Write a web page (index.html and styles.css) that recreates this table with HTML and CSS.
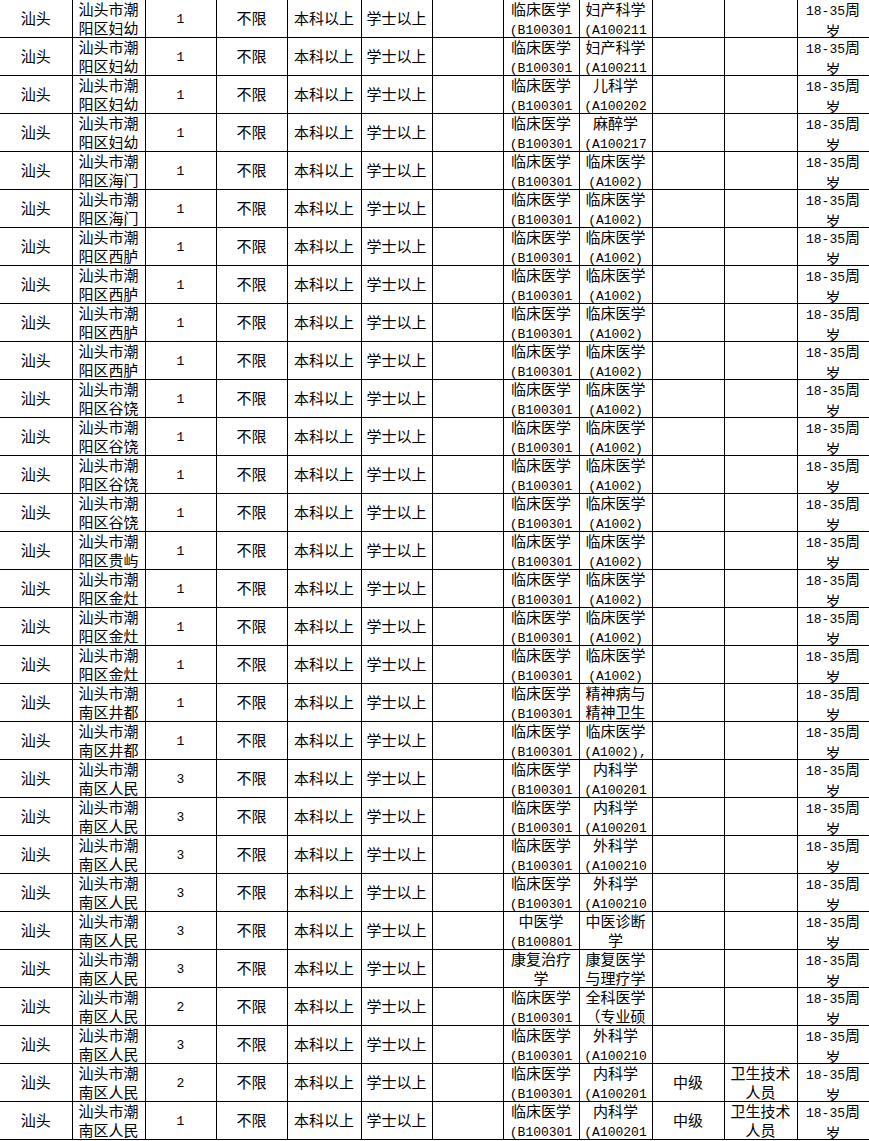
FILE: index.html
```html
<!DOCTYPE html>
<html lang="zh-CN">
<head>
<meta charset="utf-8">
<title>岗位表</title>
<link rel="stylesheet" href="styles.css">
</head>
<body>
<table class="grid">
<colgroup>
<col class="w72"><col class="w73"><col class="w71"><col class="w71"><col class="w74"><col class="w71"><col class="w71"><col class="w76"><col class="w73"><col class="w72"><col class="w73"><col class="w72">
</colgroup>
<tbody>
<tr><td><div class="c">汕头</div></td><td><div class="c">汕头市潮<br>阳区妇幼</div></td><td><div class="c"><span class="l">1</span></div></td><td><div class="c">不限</div></td><td><div class="c">本科以上</div></td><td><div class="c">学士以上</div></td><td><div class="c"></div></td><td><div class="c">临床医学<br><span class="l">(B100301</span></div></td><td><div class="c">妇产科学<br><span class="l">(A100211</span></div></td><td><div class="c"></div></td><td><div class="c"></div></td><td><div class="c"><span class="l">18-35</span>周<br>岁</div></td></tr>
<tr><td><div class="c">汕头</div></td><td><div class="c">汕头市潮<br>阳区妇幼</div></td><td><div class="c"><span class="l">1</span></div></td><td><div class="c">不限</div></td><td><div class="c">本科以上</div></td><td><div class="c">学士以上</div></td><td><div class="c"></div></td><td><div class="c">临床医学<br><span class="l">(B100301</span></div></td><td><div class="c">妇产科学<br><span class="l">(A100211</span></div></td><td><div class="c"></div></td><td><div class="c"></div></td><td><div class="c"><span class="l">18-35</span>周<br>岁</div></td></tr>
<tr><td><div class="c">汕头</div></td><td><div class="c">汕头市潮<br>阳区妇幼</div></td><td><div class="c"><span class="l">1</span></div></td><td><div class="c">不限</div></td><td><div class="c">本科以上</div></td><td><div class="c">学士以上</div></td><td><div class="c"></div></td><td><div class="c">临床医学<br><span class="l">(B100301</span></div></td><td><div class="c">儿科学<br><span class="l">(A100202</span></div></td><td><div class="c"></div></td><td><div class="c"></div></td><td><div class="c"><span class="l">18-35</span>周<br>岁</div></td></tr>
<tr><td><div class="c">汕头</div></td><td><div class="c">汕头市潮<br>阳区妇幼</div></td><td><div class="c"><span class="l">1</span></div></td><td><div class="c">不限</div></td><td><div class="c">本科以上</div></td><td><div class="c">学士以上</div></td><td><div class="c"></div></td><td><div class="c">临床医学<br><span class="l">(B100301</span></div></td><td><div class="c">麻醉学<br><span class="l">(A100217</span></div></td><td><div class="c"></div></td><td><div class="c"></div></td><td><div class="c"><span class="l">18-35</span>周<br>岁</div></td></tr>
<tr><td><div class="c">汕头</div></td><td><div class="c">汕头市潮<br>阳区海门</div></td><td><div class="c"><span class="l">1</span></div></td><td><div class="c">不限</div></td><td><div class="c">本科以上</div></td><td><div class="c">学士以上</div></td><td><div class="c"></div></td><td><div class="c">临床医学<br><span class="l">(B100301</span></div></td><td><div class="c">临床医学<br><span class="l">(A1002)</span></div></td><td><div class="c"></div></td><td><div class="c"></div></td><td><div class="c"><span class="l">18-35</span>周<br>岁</div></td></tr>
<tr><td><div class="c">汕头</div></td><td><div class="c">汕头市潮<br>阳区海门</div></td><td><div class="c"><span class="l">1</span></div></td><td><div class="c">不限</div></td><td><div class="c">本科以上</div></td><td><div class="c">学士以上</div></td><td><div class="c"></div></td><td><div class="c">临床医学<br><span class="l">(B100301</span></div></td><td><div class="c">临床医学<br><span class="l">(A1002)</span></div></td><td><div class="c"></div></td><td><div class="c"></div></td><td><div class="c"><span class="l">18-35</span>周<br>岁</div></td></tr>
<tr><td><div class="c">汕头</div></td><td><div class="c">汕头市潮<br>阳区西胪</div></td><td><div class="c"><span class="l">1</span></div></td><td><div class="c">不限</div></td><td><div class="c">本科以上</div></td><td><div class="c">学士以上</div></td><td><div class="c"></div></td><td><div class="c">临床医学<br><span class="l">(B100301</span></div></td><td><div class="c">临床医学<br><span class="l">(A1002)</span></div></td><td><div class="c"></div></td><td><div class="c"></div></td><td><div class="c"><span class="l">18-35</span>周<br>岁</div></td></tr>
<tr><td><div class="c">汕头</div></td><td><div class="c">汕头市潮<br>阳区西胪</div></td><td><div class="c"><span class="l">1</span></div></td><td><div class="c">不限</div></td><td><div class="c">本科以上</div></td><td><div class="c">学士以上</div></td><td><div class="c"></div></td><td><div class="c">临床医学<br><span class="l">(B100301</span></div></td><td><div class="c">临床医学<br><span class="l">(A1002)</span></div></td><td><div class="c"></div></td><td><div class="c"></div></td><td><div class="c"><span class="l">18-35</span>周<br>岁</div></td></tr>
<tr><td><div class="c">汕头</div></td><td><div class="c">汕头市潮<br>阳区西胪</div></td><td><div class="c"><span class="l">1</span></div></td><td><div class="c">不限</div></td><td><div class="c">本科以上</div></td><td><div class="c">学士以上</div></td><td><div class="c"></div></td><td><div class="c">临床医学<br><span class="l">(B100301</span></div></td><td><div class="c">临床医学<br><span class="l">(A1002)</span></div></td><td><div class="c"></div></td><td><div class="c"></div></td><td><div class="c"><span class="l">18-35</span>周<br>岁</div></td></tr>
<tr><td><div class="c">汕头</div></td><td><div class="c">汕头市潮<br>阳区西胪</div></td><td><div class="c"><span class="l">1</span></div></td><td><div class="c">不限</div></td><td><div class="c">本科以上</div></td><td><div class="c">学士以上</div></td><td><div class="c"></div></td><td><div class="c">临床医学<br><span class="l">(B100301</span></div></td><td><div class="c">临床医学<br><span class="l">(A1002)</span></div></td><td><div class="c"></div></td><td><div class="c"></div></td><td><div class="c"><span class="l">18-35</span>周<br>岁</div></td></tr>
<tr><td><div class="c">汕头</div></td><td><div class="c">汕头市潮<br>阳区谷饶</div></td><td><div class="c"><span class="l">1</span></div></td><td><div class="c">不限</div></td><td><div class="c">本科以上</div></td><td><div class="c">学士以上</div></td><td><div class="c"></div></td><td><div class="c">临床医学<br><span class="l">(B100301</span></div></td><td><div class="c">临床医学<br><span class="l">(A1002)</span></div></td><td><div class="c"></div></td><td><div class="c"></div></td><td><div class="c"><span class="l">18-35</span>周<br>岁</div></td></tr>
<tr><td><div class="c">汕头</div></td><td><div class="c">汕头市潮<br>阳区谷饶</div></td><td><div class="c"><span class="l">1</span></div></td><td><div class="c">不限</div></td><td><div class="c">本科以上</div></td><td><div class="c">学士以上</div></td><td><div class="c"></div></td><td><div class="c">临床医学<br><span class="l">(B100301</span></div></td><td><div class="c">临床医学<br><span class="l">(A1002)</span></div></td><td><div class="c"></div></td><td><div class="c"></div></td><td><div class="c"><span class="l">18-35</span>周<br>岁</div></td></tr>
<tr><td><div class="c">汕头</div></td><td><div class="c">汕头市潮<br>阳区谷饶</div></td><td><div class="c"><span class="l">1</span></div></td><td><div class="c">不限</div></td><td><div class="c">本科以上</div></td><td><div class="c">学士以上</div></td><td><div class="c"></div></td><td><div class="c">临床医学<br><span class="l">(B100301</span></div></td><td><div class="c">临床医学<br><span class="l">(A1002)</span></div></td><td><div class="c"></div></td><td><div class="c"></div></td><td><div class="c"><span class="l">18-35</span>周<br>岁</div></td></tr>
<tr><td><div class="c">汕头</div></td><td><div class="c">汕头市潮<br>阳区谷饶</div></td><td><div class="c"><span class="l">1</span></div></td><td><div class="c">不限</div></td><td><div class="c">本科以上</div></td><td><div class="c">学士以上</div></td><td><div class="c"></div></td><td><div class="c">临床医学<br><span class="l">(B100301</span></div></td><td><div class="c">临床医学<br><span class="l">(A1002)</span></div></td><td><div class="c"></div></td><td><div class="c"></div></td><td><div class="c"><span class="l">18-35</span>周<br>岁</div></td></tr>
<tr><td><div class="c">汕头</div></td><td><div class="c">汕头市潮<br>阳区贵屿</div></td><td><div class="c"><span class="l">1</span></div></td><td><div class="c">不限</div></td><td><div class="c">本科以上</div></td><td><div class="c">学士以上</div></td><td><div class="c"></div></td><td><div class="c">临床医学<br><span class="l">(B100301</span></div></td><td><div class="c">临床医学<br><span class="l">(A1002)</span></div></td><td><div class="c"></div></td><td><div class="c"></div></td><td><div class="c"><span class="l">18-35</span>周<br>岁</div></td></tr>
<tr><td><div class="c">汕头</div></td><td><div class="c">汕头市潮<br>阳区金灶</div></td><td><div class="c"><span class="l">1</span></div></td><td><div class="c">不限</div></td><td><div class="c">本科以上</div></td><td><div class="c">学士以上</div></td><td><div class="c"></div></td><td><div class="c">临床医学<br><span class="l">(B100301</span></div></td><td><div class="c">临床医学<br><span class="l">(A1002)</span></div></td><td><div class="c"></div></td><td><div class="c"></div></td><td><div class="c"><span class="l">18-35</span>周<br>岁</div></td></tr>
<tr><td><div class="c">汕头</div></td><td><div class="c">汕头市潮<br>阳区金灶</div></td><td><div class="c"><span class="l">1</span></div></td><td><div class="c">不限</div></td><td><div class="c">本科以上</div></td><td><div class="c">学士以上</div></td><td><div class="c"></div></td><td><div class="c">临床医学<br><span class="l">(B100301</span></div></td><td><div class="c">临床医学<br><span class="l">(A1002)</span></div></td><td><div class="c"></div></td><td><div class="c"></div></td><td><div class="c"><span class="l">18-35</span>周<br>岁</div></td></tr>
<tr><td><div class="c">汕头</div></td><td><div class="c">汕头市潮<br>阳区金灶</div></td><td><div class="c"><span class="l">1</span></div></td><td><div class="c">不限</div></td><td><div class="c">本科以上</div></td><td><div class="c">学士以上</div></td><td><div class="c"></div></td><td><div class="c">临床医学<br><span class="l">(B100301</span></div></td><td><div class="c">临床医学<br><span class="l">(A1002)</span></div></td><td><div class="c"></div></td><td><div class="c"></div></td><td><div class="c"><span class="l">18-35</span>周<br>岁</div></td></tr>
<tr><td><div class="c">汕头</div></td><td><div class="c">汕头市潮<br>南区井都</div></td><td><div class="c"><span class="l">1</span></div></td><td><div class="c">不限</div></td><td><div class="c">本科以上</div></td><td><div class="c">学士以上</div></td><td><div class="c"></div></td><td><div class="c">临床医学<br><span class="l">(B100301</span></div></td><td><div class="c">精神病与<br>精神卫生</div></td><td><div class="c"></div></td><td><div class="c"></div></td><td><div class="c"><span class="l">18-35</span>周<br>岁</div></td></tr>
<tr><td><div class="c">汕头</div></td><td><div class="c">汕头市潮<br>南区井都</div></td><td><div class="c"><span class="l">1</span></div></td><td><div class="c">不限</div></td><td><div class="c">本科以上</div></td><td><div class="c">学士以上</div></td><td><div class="c"></div></td><td><div class="c">临床医学<br><span class="l">(B100301</span></div></td><td><div class="c">临床医学<br><span class="l">(A1002),</span></div></td><td><div class="c"></div></td><td><div class="c"></div></td><td><div class="c"><span class="l">18-35</span>周<br>岁</div></td></tr>
<tr><td><div class="c">汕头</div></td><td><div class="c">汕头市潮<br>南区人民</div></td><td><div class="c"><span class="l">3</span></div></td><td><div class="c">不限</div></td><td><div class="c">本科以上</div></td><td><div class="c">学士以上</div></td><td><div class="c"></div></td><td><div class="c">临床医学<br><span class="l">(B100301</span></div></td><td><div class="c">内科学<br><span class="l">(A100201</span></div></td><td><div class="c"></div></td><td><div class="c"></div></td><td><div class="c"><span class="l">18-35</span>周<br>岁</div></td></tr>
<tr><td><div class="c">汕头</div></td><td><div class="c">汕头市潮<br>南区人民</div></td><td><div class="c"><span class="l">3</span></div></td><td><div class="c">不限</div></td><td><div class="c">本科以上</div></td><td><div class="c">学士以上</div></td><td><div class="c"></div></td><td><div class="c">临床医学<br><span class="l">(B100301</span></div></td><td><div class="c">内科学<br><span class="l">(A100201</span></div></td><td><div class="c"></div></td><td><div class="c"></div></td><td><div class="c"><span class="l">18-35</span>周<br>岁</div></td></tr>
<tr><td><div class="c">汕头</div></td><td><div class="c">汕头市潮<br>南区人民</div></td><td><div class="c"><span class="l">3</span></div></td><td><div class="c">不限</div></td><td><div class="c">本科以上</div></td><td><div class="c">学士以上</div></td><td><div class="c"></div></td><td><div class="c">临床医学<br><span class="l">(B100301</span></div></td><td><div class="c">外科学<br><span class="l">(A100210</span></div></td><td><div class="c"></div></td><td><div class="c"></div></td><td><div class="c"><span class="l">18-35</span>周<br>岁</div></td></tr>
<tr><td><div class="c">汕头</div></td><td><div class="c">汕头市潮<br>南区人民</div></td><td><div class="c"><span class="l">3</span></div></td><td><div class="c">不限</div></td><td><div class="c">本科以上</div></td><td><div class="c">学士以上</div></td><td><div class="c"></div></td><td><div class="c">临床医学<br><span class="l">(B100301</span></div></td><td><div class="c">外科学<br><span class="l">(A100210</span></div></td><td><div class="c"></div></td><td><div class="c"></div></td><td><div class="c"><span class="l">18-35</span>周<br>岁</div></td></tr>
<tr><td><div class="c">汕头</div></td><td><div class="c">汕头市潮<br>南区人民</div></td><td><div class="c"><span class="l">3</span></div></td><td><div class="c">不限</div></td><td><div class="c">本科以上</div></td><td><div class="c">学士以上</div></td><td><div class="c"></div></td><td><div class="c">中医学<br><span class="l">(B100801</span></div></td><td><div class="c">中医诊断<br>学</div></td><td><div class="c"></div></td><td><div class="c"></div></td><td><div class="c"><span class="l">18-35</span>周<br>岁</div></td></tr>
<tr><td><div class="c">汕头</div></td><td><div class="c">汕头市潮<br>南区人民</div></td><td><div class="c"><span class="l">3</span></div></td><td><div class="c">不限</div></td><td><div class="c">本科以上</div></td><td><div class="c">学士以上</div></td><td><div class="c"></div></td><td><div class="c">康复治疗<br>学</div></td><td><div class="c">康复医学<br>与理疗学</div></td><td><div class="c"></div></td><td><div class="c"></div></td><td><div class="c"><span class="l">18-35</span>周<br>岁</div></td></tr>
<tr><td><div class="c">汕头</div></td><td><div class="c">汕头市潮<br>南区人民</div></td><td><div class="c"><span class="l">2</span></div></td><td><div class="c">不限</div></td><td><div class="c">本科以上</div></td><td><div class="c">学士以上</div></td><td><div class="c"></div></td><td><div class="c">临床医学<br><span class="l">(B100301</span></div></td><td><div class="c">全科医学<br>（专业硕</div></td><td><div class="c"></div></td><td><div class="c"></div></td><td><div class="c"><span class="l">18-35</span>周<br>岁</div></td></tr>
<tr><td><div class="c">汕头</div></td><td><div class="c">汕头市潮<br>南区人民</div></td><td><div class="c"><span class="l">3</span></div></td><td><div class="c">不限</div></td><td><div class="c">本科以上</div></td><td><div class="c">学士以上</div></td><td><div class="c"></div></td><td><div class="c">临床医学<br><span class="l">(B100301</span></div></td><td><div class="c">外科学<br><span class="l">(A100210</span></div></td><td><div class="c"></div></td><td><div class="c"></div></td><td><div class="c"><span class="l">18-35</span>周<br>岁</div></td></tr>
<tr><td><div class="c">汕头</div></td><td><div class="c">汕头市潮<br>南区人民</div></td><td><div class="c"><span class="l">2</span></div></td><td><div class="c">不限</div></td><td><div class="c">本科以上</div></td><td><div class="c">学士以上</div></td><td><div class="c"></div></td><td><div class="c">临床医学<br><span class="l">(B100301</span></div></td><td><div class="c">内科学<br><span class="l">(A100201</span></div></td><td><div class="c">中级</div></td><td><div class="c">卫生技术<br>人员</div></td><td><div class="c"><span class="l">18-35</span>周<br>岁</div></td></tr>
<tr><td><div class="c">汕头</div></td><td><div class="c">汕头市潮<br>南区人民</div></td><td><div class="c"><span class="l">1</span></div></td><td><div class="c">不限</div></td><td><div class="c">本科以上</div></td><td><div class="c">学士以上</div></td><td><div class="c"></div></td><td><div class="c">临床医学<br><span class="l">(B100301</span></div></td><td><div class="c">内科学<br><span class="l">(A100201</span></div></td><td><div class="c">中级</div></td><td><div class="c">卫生技术<br>人员</div></td><td><div class="c"><span class="l">18-35</span>周<br>岁</div></td></tr>
</tbody>
</table>
</body>
</html>
```
FILE: styles.css
```css
html, body {
  margin: 0;
  padding: 0;
  background: #ffffff;
}

.grid {
  border-collapse: collapse;
  table-layout: fixed;
  width: 869px;
  border-top-style: hidden;
  border-left-style: hidden;
  font-family: "Noto Sans CJK SC", "Noto Sans", sans-serif;
  font-size: 15px;
  color: #000000;
}

.w71 { width: 71px; }
.w72 { width: 72px; }
.w73 { width: 73px; }
.w74 { width: 74px; }
.w76 { width: 76px; }

.grid td {
  border: 1px solid #000000;
  padding: 0;
  height: 37px;
  vertical-align: middle;
}

.c {
  max-height: 37px;
  overflow: hidden;
  white-space: nowrap;
  text-align: center;
  line-height: 18.5px;
}

.l {
  font-family: "Liberation Mono", "DejaVu Sans Mono", monospace;
  font-size: 13px;
}
```
